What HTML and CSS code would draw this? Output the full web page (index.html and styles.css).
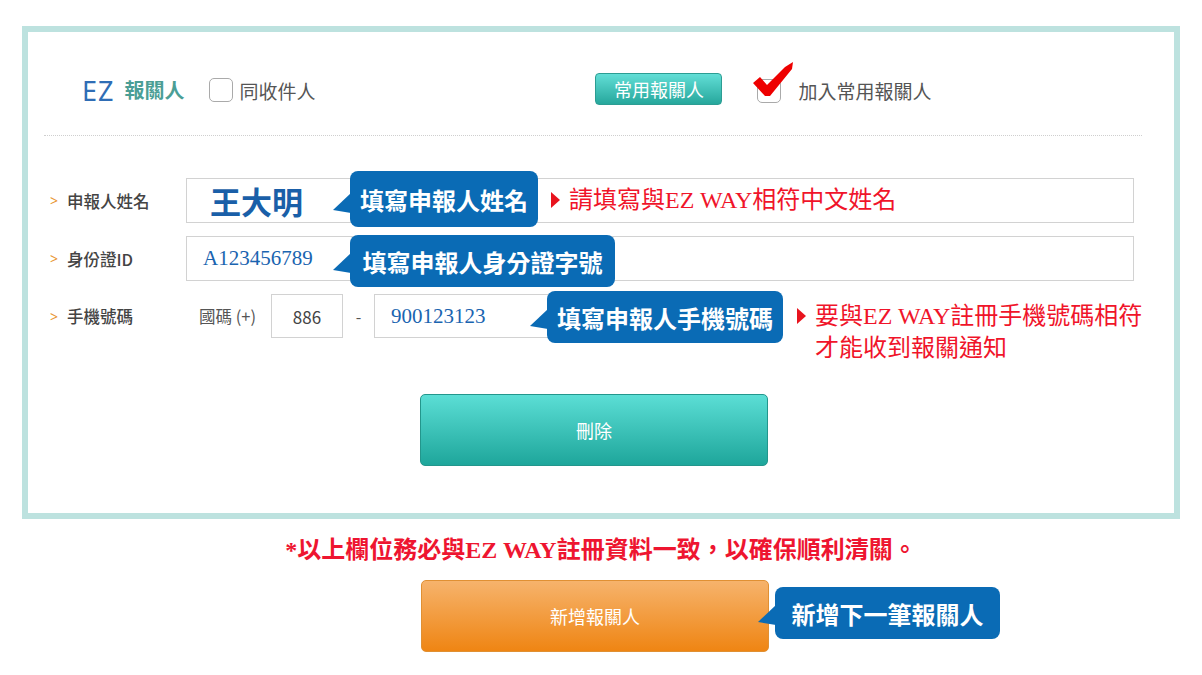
FILE: index.html
```html
<!DOCTYPE html>
<html lang="zh-Hant">
<head>
<meta charset="utf-8">
<title>EZ 報關人</title>
<link rel="stylesheet" href="styles.css">
</head>
<body>
<div class="frame">
  <div class="header">
    <div class="brand"><span class="ez">EZ</span><span class="brand-cn">報關人</span></div>
    <label class="check check-same"><span class="box"></span><span class="check-text">同收件人</span></label>
    <div class="spacer"></div>
    <button class="fav-btn">常用報關人</button>
    <label class="check check-fav">
      <span class="box"></span>
      <svg class="tick" width="44" height="40" viewBox="0 0 44 40"><polygon points="0,21 7,15 14,23 32,5 40,0 39,7 17,34 12,34" fill="#ee0000"/></svg>
      <span class="check-text">加入常用報關人</span>
    </label>
  </div>

  <div class="form">
    <div class="row">
      <div class="label"><span class="arrow">&gt;</span>申報人姓名</div>
      <div class="input wide"><span class="val-name">王大明</span></div>
      <div class="bubble b1">
        <svg class="tail" width="18" height="22" viewBox="0 0 18 22"><polygon points="18,0 0,17 18,20" fill="#0a6bb5"/></svg>
        填寫申報人姓名
      </div>
      <div class="hint h1"><span class="tri"></span>請填寫與EZ WAY相符中文姓名</div>
    </div>
    <div class="row">
      <div class="label"><span class="arrow">&gt;</span>身份證ID</div>
      <div class="input wide"><span class="val">A123456789</span></div>
      <div class="bubble b2">
        <svg class="tail" width="18" height="22" viewBox="0 0 18 22"><polygon points="18,0 0,17 18,20" fill="#0a6bb5"/></svg>
        填寫申報人身分證字號
      </div>
    </div>
    <div class="row row-phone">
      <div class="label"><span class="arrow">&gt;</span>手機號碼</div>
      <span class="cc">國碼 (+)</span>
      <div class="input code">886</div>
      <span class="dash">-</span>
      <div class="input phone"><span class="val">900123123</span></div>
      <div class="bubble b3">
        <svg class="tail" width="18" height="22" viewBox="0 0 18 22"><polygon points="18,0 0,17 18,20" fill="#0a6bb5"/></svg>
        填寫申報人手機號碼
      </div>
      <div class="hint h3"><span class="tri"></span><span>要與EZ WAY註冊手機號碼相符<br>才能收到報關通知</span></div>
    </div>
    <button class="del-btn">刪除</button>
  </div>
</div>

<p class="notice">*以上欄位務必與EZ WAY註冊資料一致，以確保順利清關。</p>

<div class="add-wrap">
  <button class="add-btn">新增報關人</button>
  <div class="bubble b4">
    <svg class="tail" width="18" height="22" viewBox="0 0 18 22"><polygon points="18,0 0,17 18,20" fill="#0a6bb5"/></svg>
    新增下一筆報關人
  </div>
</div>
</body>
</html>
```
FILE: styles.css
```css
* { box-sizing: border-box; }
body {
  margin: 0;
  background: #fff;
  font-family: "Noto Sans CJK TC", "Noto Sans", sans-serif;
  color: #444;
}
.frame {
  margin: 26px 22px 0;
  width: 1158px;
  height: 493px;
  border: 6px solid #bde2df;
}
.header {
  display: flex;
  align-items: center;
  height: 104px;
  padding: 13px 0 0 38px;
  margin: 0 32px 0 16px;
  border-bottom: 1px dotted #cfcfcf;
}
.brand { display: flex; align-items: center; }
.ez {
  font-family: "Noto Sans", sans-serif;
  font-size: 27px;
  font-weight: 400;
  color: #2f6db5;
  letter-spacing: 1px;
  line-height: 1;
}
.brand-cn {
  margin-left: 10px;
  font-size: 20px;
  font-weight: bold;
  color: #4b9e95;
  line-height: 1;
}
.check {
  display: flex;
  align-items: center;
  position: relative;
}
.check-same { margin-left: 25px; }
.box {
  width: 24px;
  height: 24px;
  border: 1px solid #aaa;
  border-radius: 5px;
  background: #fff;
}
.check-text {
  margin-left: 6px;
  font-size: 19px;
  color: #555;
  line-height: 1;
}
.spacer { flex: 1; max-width: 280px; }
.fav-btn {
  width: 127px;
  height: 32px;
  margin-top: -3px;
  border: 1px solid #2c9d93;
  border-radius: 4px;
  background: linear-gradient(#62ded6, #26a79c);
  color: #fff;
  font-family: "Noto Sans CJK TC", sans-serif;
  font-size: 18px;
  padding: 0;
  line-height: 30px;
}
.check-fav { margin-left: 35px; }
.check-fav .box { margin-top: 2px; }
.check-fav .check-text { margin-left: 17px; }
.tick {
  position: absolute;
  left: -4px;
  top: -15px;
}
.form {
  padding: 42px 0 0 22px;
}
.row {
  position: relative;
  display: flex;
  align-items: center;
  height: 45px;
  margin-bottom: 13px;
}
.row-phone { height: 44px; margin-bottom: 0; }
.label {
  width: 136px;
  font-size: 16.5px;
  font-weight: 500;
  color: #444;
  display: flex;
  align-items: center;
}
.arrow {
  color: #e8952e;
  font-family: "Noto Sans", sans-serif;
  font-size: 14px;
  font-weight: 400;
  width: 17px;
}
.input {
  height: 100%;
  border: 1px solid #d2d2d2;
  background: #fff;
  display: flex;
  align-items: center;
}
.wide { width: 948px; }
.val-name {
  margin-left: 23px;
  font-family: "Liberation Serif", "Noto Sans CJK TC", serif;
  font-weight: bold;
  font-size: 31px;
  color: #1a5fa8;
}
.val {
  margin-left: 16px;
  font-family: "Liberation Serif", serif;
  font-size: 21px;
  color: #1a64b0;
}
.cc {
  margin-left: 13px;
  width: 72px;
  font-size: 16.5px;
  color: #555;
}
.code {
  width: 72px;
  justify-content: center;
  font-size: 17px;
  color: #444;
}
.dash {
  width: 31px;
  text-align: center;
  font-size: 16px;
  color: #555;
}
.phone { width: 180px; }
.bubble {
  position: absolute;
  background: #0a6bb5;
  color: #fff;
  border-radius: 8px;
  font-family: "Liberation Serif", "Noto Sans CJK TC", serif;
  font-weight: bold;
  font-size: 24px;
  display: flex;
  align-items: center;
  justify-content: center;
  white-space: nowrap;
}
.tail {
  position: absolute;
  left: -17px;
  top: 22px;
}
.b1 { left: 300px; top: -7px; width: 188px; height: 56px; }
.b2 { left: 300px; top: -1px; width: 265px; height: 52px; }
.b3 { left: 497px; top: -3px; width: 236px; height: 52px; }
.b2 .tail, .b3 .tail { top: 18px; }
.hint {
  position: absolute;
  display: flex;
  align-items: center;
  font-family: "Liberation Serif", "Noto Sans CJK TC", serif;
  font-size: 24px;
  color: #f0142a;
  white-space: nowrap;
}
.tri {
  width: 0;
  height: 0;
  border-top: 8px solid transparent;
  border-bottom: 8px solid transparent;
  border-left: 9px solid #e8141e;
  margin-right: 9px;
}
.h1 { left: 501px; top: 6px; line-height: 32px; }
.h3 { left: 747px; top: 6px; line-height: 32px; align-items: flex-start; }
.h3 .tri { margin-top: 8px; }
.del-btn {
  display: block;
  margin: 56px 0 0 370px;
  width: 348px;
  height: 72px;
  border: 1px solid #23968c;
  border-radius: 5px;
  background: linear-gradient(#5bded5, #1ea69b);
  color: #fff;
  font-family: "Noto Sans CJK TC", sans-serif;
  font-size: 18px;
}
.notice {
  margin: 16px 0 0;
  text-align: center;
  font-family: "Liberation Serif", "Noto Sans CJK TC", serif;
  font-weight: bold;
  font-size: 24px;
  color: #ee1530;
  line-height: 30px;
}
.add-wrap {
  position: relative;
  margin: 15px 0 0 421px;
  width: 348px;
}
.add-btn {
  display: block;
  width: 348px;
  height: 72px;
  border: 1px solid #e09033;
  border-radius: 5px;
  background: linear-gradient(#f6b36c, #ef8513);
  color: #fff;
  font-family: "Noto Sans CJK TC", sans-serif;
  font-size: 18px;
}
.b4 { left: 354px; top: 7px; width: 225px; height: 52px; }
.b4 .tail { top: 18px; }
```
